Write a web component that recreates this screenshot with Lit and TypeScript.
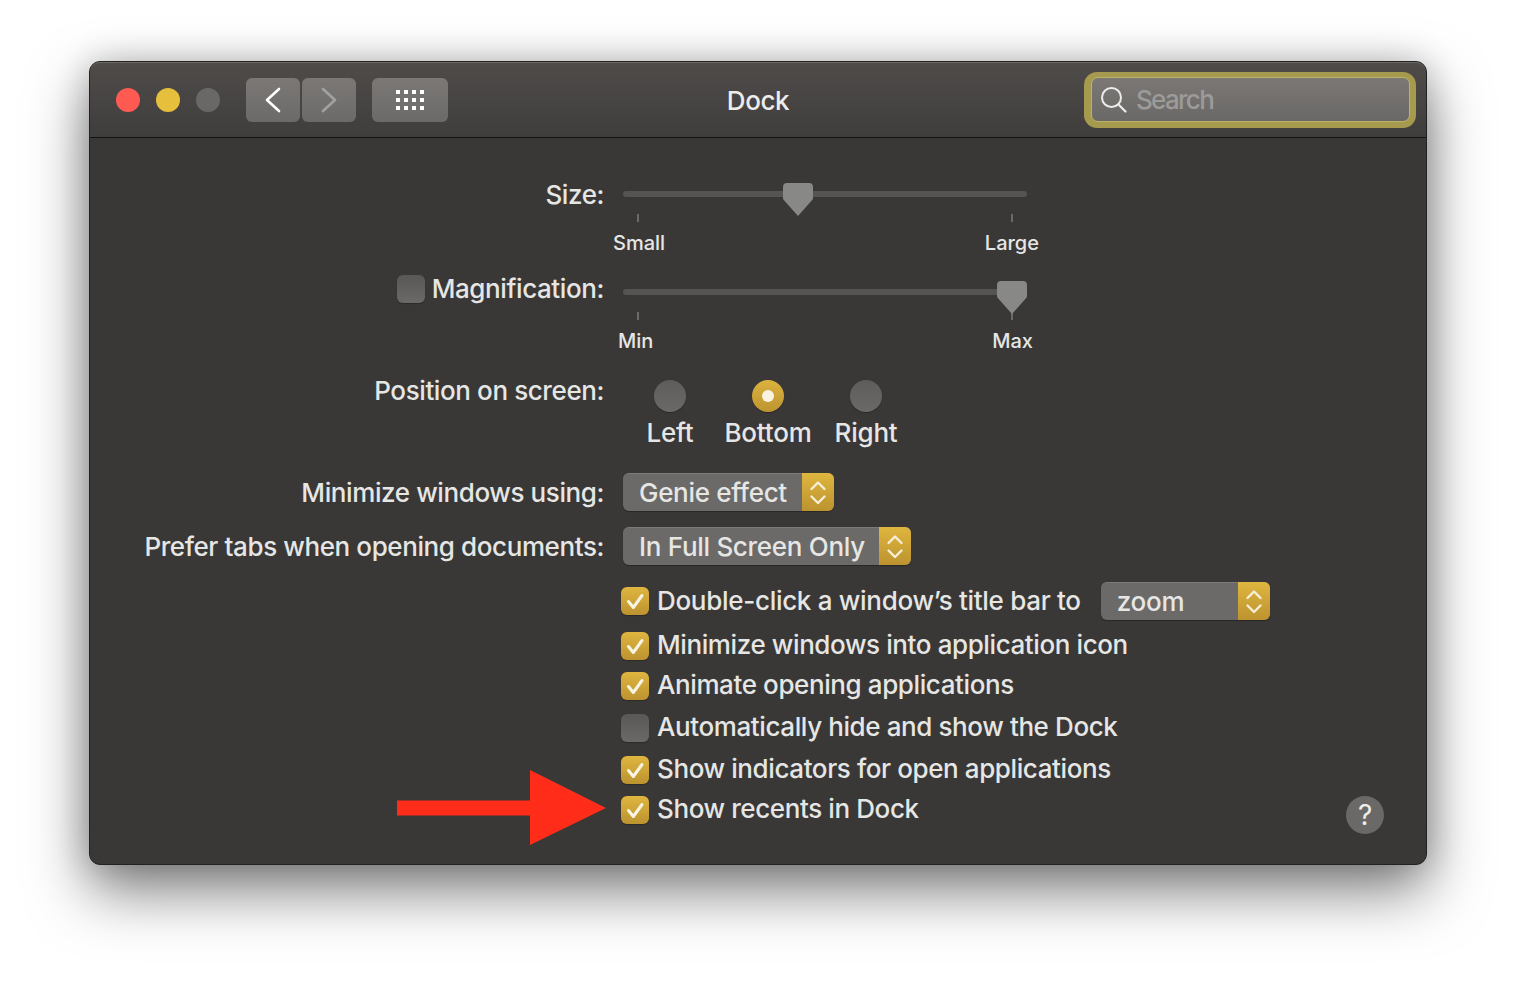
import { LitElement, html, css, svg } from "lit";
import { customElement } from "lit/decorators.js";

const chevrons = html`<svg class="chev" viewBox="0 0 18 26" width="18" height="26" aria-hidden="true">
  <path d="M2.5 10 9 3.5l6.5 6.5M2.5 17.5 9 24l6.5-6.5" fill="none" stroke="#f6eed6" stroke-width="2.4" stroke-linecap="round" stroke-linejoin="round"/>
</svg>`;

const check = html`<svg class="tick" viewBox="0 0 28 28" width="28" height="28" aria-hidden="true">
  <path d="M7.5 14.5 12.3 20.5 21 8.5" fill="none" stroke="#f8f3e2" stroke-width="3" stroke-linecap="round" stroke-linejoin="round"/>
</svg>`;

const gridDots = [0, 1, 2, 3].flatMap((c) =>
  [0, 1, 2].map((r) => svg`<rect x=${c * 8} y=${r * 8} width="4" height="4" fill="#fff"/>`)
);

@customElement("app-root")
export class AppRoot extends LitElement {
  static styles = css`
    :host {
      display: block;
      width: 1516px;
      height: 982px;
      box-sizing: border-box;
      padding: 61px 89px;
      background: #fff;
      font-family: Inter, "Liberation Sans", sans-serif;
      font-size: 26px;
      font-weight: 450;
      letter-spacing: -0.4px;
      color: #e6e6e5;
    }
    .window {
      position: relative;
      box-sizing: border-box;
      width: 1338px;
      height: 804px;
      border: 1px solid #232221;
      border-radius: 11px;
      background: #393836;
      box-shadow: 0 26px 60px rgba(0, 0, 0, 0.5), 0 0 34px rgba(0, 0, 0, 0.2);
    }
    .titlebar {
      box-sizing: border-box;
      height: 76px;
      display: grid;
      grid-template-columns: minmax(0, 1fr) auto minmax(0, 1fr);
      align-items: center;
      padding: 0 10px;
      border-radius: 10px 10px 0 0;
      border-top: 1px solid #6b6966;
      border-bottom: 1px solid #141413;
      background: linear-gradient(#4e4b49, #403e3d);
    }
    .left { display: flex; align-items: center; padding-left: 16px; }
    .light { width: 24px; height: 24px; border-radius: 50%; margin-right: 16px; }
    .red { background: #ff5a52; }
    .yellow { background: #e6c03c; }
    .grey { background: #6a6866; margin-right: 26px; }
    .btn {
      height: 44px;
      width: 54px;
      border-radius: 6px;
      display: flex;
      align-items: center;
      justify-content: center;
      background: linear-gradient(#7b7876, #6c6a68);
    }
    .btn + .btn { margin-left: 2px; }
    .btn.apps { width: 76px; margin-left: 16px; }
    .title { font-size: 26px; letter-spacing: -0.42px; color: #ececeb; text-align: center; }
    .search {
      justify-self: end;
      box-sizing: border-box;
      width: 332px;
      height: 56px;
      padding: 5px 6px 6px 7px;
      border-radius: 13px;
      background: #a69a4e;
    }
    .field {
      box-sizing: border-box;
      height: 45px;
      border: 1px solid #bdb26a;
      border-radius: 7px;
      background: linear-gradient(#7b7876, #6a6866);
      display: flex;
      align-items: center;
      padding-left: 8px;
      gap: 9px;
      color: #9c9b9a;
      letter-spacing: -1.7px;
    }
    .body { padding: 38px 42px 0 0; }
    .row {
      display: grid;
      grid-template-columns: 514px 1fr;
      column-gap: 19px;
    }
    .label {
      display: flex;
      justify-content: flex-end;
      align-items: center;
      gap: 7px;
      height: 38px;
      line-height: 38px;
      white-space: nowrap;
    }
    .mag { margin-top: 16px; }
    .pos { margin-top: 20px; }
    .pop1 { margin-top: 26px; }
    .pop2 { margin-top: 16px; }
    .pop1 .label, .pop2 .label { padding-top: 2px; box-sizing: border-box; }
    .chk1 { margin-top: 17px; }

    .slider { width: 404px; }
    .mag .slider { margin-top: 4px; }
    .wrap { position: relative; height: 36px; display: flex; align-items: center; }
    .track { width: 100%; height: 6px; border-radius: 3px; background: #555452; }
    .thumb { position: absolute; top: 7px; width: 30px; height: 34px; display: block; }
    .ticks { display: flex; justify-content: space-between; padding: 0 14px; margin-top: 2px; }
    .ticks i { width: 2px; height: 8px; background: #6b6a68; }
    .scale {
      display: flex;
      justify-content: space-between;
      margin-top: 10px;
      font-size: 20px;
      line-height: 22px;
      letter-spacing: 0;
    }
    .scale.s { margin-left: -10px; margin-right: -12px; }
    .scale.m { margin-left: -5px; margin-right: -6px; }

    .radios { display: grid; grid-template-columns: repeat(3, 98px); margin: 8px 0 0 -2px; }
    .radio { display: flex; flex-direction: column; align-items: center; gap: 7px; line-height: 28px; letter-spacing: -0.2px; }
    .dot {
      width: 32px;
      height: 32px;
      border-radius: 50%;
      background: linear-gradient(#5e5d5b, #6a6967);
      box-shadow: 0 1px 1px rgba(0, 0, 0, 0.25);
      display: flex;
      align-items: center;
      justify-content: center;
    }
    .dot.on { background: linear-gradient(#dcb33e, #bd9430); }
    .dot.on::after {
      content: "";
      width: 12px;
      height: 12px;
      border-radius: 50%;
      background: #f9f4e2;
    }

    .popup {
      box-sizing: border-box;
      height: 38px;
      display: flex;
      align-items: stretch;
      justify-content: space-between;
      border-radius: 6px;
      background: #6b6a68;
      border-top: 1px solid #7c7b79;
      box-shadow: 0 1px 1px rgba(0, 0, 0, 0.3);
      line-height: 37px;
      padding-left: 16px;
      white-space: nowrap;
      letter-spacing: -0.3px;
    }
    .popup.genie { width: 211px; }
    .popup.tabs { width: 288px; }
    .popup.zoom { width: 169px; margin-left: 12px; }
    .arrows {
      width: 32px;
      margin-top: -1px;
      border-radius: 0 6px 6px 0;
      background: linear-gradient(#dfb63f, #bc932f);
      display: flex;
      align-items: center;
      justify-content: center;
    }
    .checks { margin-left: -2px; display: flex; flex-direction: column; }
    .check { display: flex; align-items: center; gap: 8px; line-height: 28px; white-space: nowrap; height: 28px; }
    .check.first { height: 38px; letter-spacing: -0.3px; }
    .check.g12 { margin-top: 12px; }
    .check.g14 { margin-top: 14px; }
    .check.last { align-items: flex-start; }
    .check > .text { margin-bottom: 2px; }
    .check.first > .text { margin-bottom: 0; }
    .check.last > .text { margin: -1px 0 0; }
    .box {
      flex: none;
      width: 28px;
      height: 28px;
      border-radius: 6px;
      background: linear-gradient(#595856, #6a6967);
      box-shadow: 0 1px 1px rgba(0, 0, 0, 0.25);
    }
    .box.on { background: linear-gradient(#dfb63f, #bc932f); }
    .box svg { display: block; }
    .help {
      margin-left: auto;
      width: 38px;
      height: 38px;
      border-radius: 50%;
      background: #6a6967;
      display: flex;
      align-items: center;
      justify-content: center;
      line-height: 38px;
      font-size: 28px;
      font-weight: 400;
      color: #ececeb;
    }
    .arrow { position: absolute; left: 307px; top: 708px; display: block; }
  `;

  private slider(value: number, scale: string, lo: string, hi: string) {
    return html`<div class="slider">
      <div class="wrap">
        <div class="track"></div>
        <svg class="thumb" style="left:${value * 374}px" viewBox="0 0 30 34" aria-hidden="true">
          <path d="M4 0H26a4 4 0 0 1 4 4V15a3 3 0 0 1-1 2.2L15 33 1 17.2a3 3 0 0 1-1-2.2V4a4 4 0 0 1 4-4Z" fill="#888886"/>
        </svg>
      </div>
      <div class="ticks"><i></i><i></i></div>
      <div class="scale ${scale}"><span>${lo}</span><span>${hi}</span></div>
    </div>`;
  }

  private box(on: boolean) {
    return html`<span class="box ${on ? "on" : ""}">${on ? check : ""}</span>`;
  }

  render() {
    return html`<div class="window">
      <header class="titlebar">
        <div class="left">
          <span class="light red"></span>
          <span class="light yellow"></span>
          <span class="light grey"></span>
          <span class="btn">
            <svg width="16" height="26" viewBox="0 0 16 26" aria-hidden="true"><path d="M14 2 2 13l12 11" fill="none" stroke="#fff" stroke-width="2.6" stroke-linecap="round" stroke-linejoin="round"/></svg>
          </span>
          <span class="btn">
            <svg width="16" height="26" viewBox="0 0 16 26" aria-hidden="true"><path d="M2 2 14 13 2 24" fill="none" stroke="#a3a19f" stroke-width="2.6" stroke-linecap="round" stroke-linejoin="round"/></svg>
          </span>
          <span class="btn apps">
            <svg width="28" height="20" viewBox="0 0 28 20" aria-hidden="true">${gridDots}</svg>
          </span>
        </div>
        <div class="title">Dock</div>
        <div class="search">
          <div class="field">
            <svg width="27" height="27" viewBox="0 0 27 27" aria-hidden="true">
              <circle cx="11.5" cy="11.5" r="9.5" fill="none" stroke="#ececeb" stroke-width="2"/>
              <path d="M18.5 18.5 25.5 25.5" stroke="#ececeb" stroke-width="2.2" stroke-linecap="round"/>
            </svg>
            <span>Search</span>
          </div>
        </div>
      </header>
      <div class="body">
        <div class="row">
          <div class="label">Size:</div>
          ${this.slider(160 / 374, "s", "Small", "Large")}
        </div>
        <div class="row mag">
          <div class="label">${this.box(false)}<span>Magnification:</span></div>
          ${this.slider(1, "m", "Min", "Max")}
        </div>
        <div class="row pos">
          <div class="label">Position on screen:</div>
          <div class="radios">
            <div class="radio"><span class="dot"></span>Left</div>
            <div class="radio"><span class="dot on"></span>Bottom</div>
            <div class="radio"><span class="dot"></span>Right</div>
          </div>
        </div>
        <div class="row pop1">
          <div class="label">Minimize windows using:</div>
          <div><div class="popup genie"><span>Genie effect</span><span class="arrows">${chevrons}</span></div></div>
        </div>
        <div class="row pop2">
          <div class="label">Prefer tabs when opening documents:</div>
          <div><div class="popup tabs"><span>In Full Screen Only</span><span class="arrows">${chevrons}</span></div></div>
        </div>
        <div class="row chk1">
          <div></div>
          <div class="checks">
            <div class="check first">${this.box(true)}<span class="text">Double-click a window’s title bar to</span>
              <div class="popup zoom"><span>zoom</span><span class="arrows">${chevrons}</span></div>
            </div>
            <div class="check g12">${this.box(true)}<span class="text">Minimize windows into application icon</span></div>
            <div class="check g12">${this.box(true)}<span class="text">Animate opening applications</span></div>
            <div class="check g14">${this.box(false)}<span class="text">Automatically hide and show the Dock</span></div>
            <div class="check g14">${this.box(true)}<span class="text">Show indicators for open applications</span></div>
            <div class="check g12 last">${this.box(true)}<span class="text">Show recents in Dock</span><span class="help">?</span></div>
          </div>
        </div>
      </div>
      <svg class="arrow" width="210" height="76" viewBox="0 0 210 76" aria-hidden="true">
        <path d="M0 30.5H133V0L209 38 133 75V45.5H0Z" fill="#ff2c1a"/>
      </svg>
    </div>`;
  }
}
